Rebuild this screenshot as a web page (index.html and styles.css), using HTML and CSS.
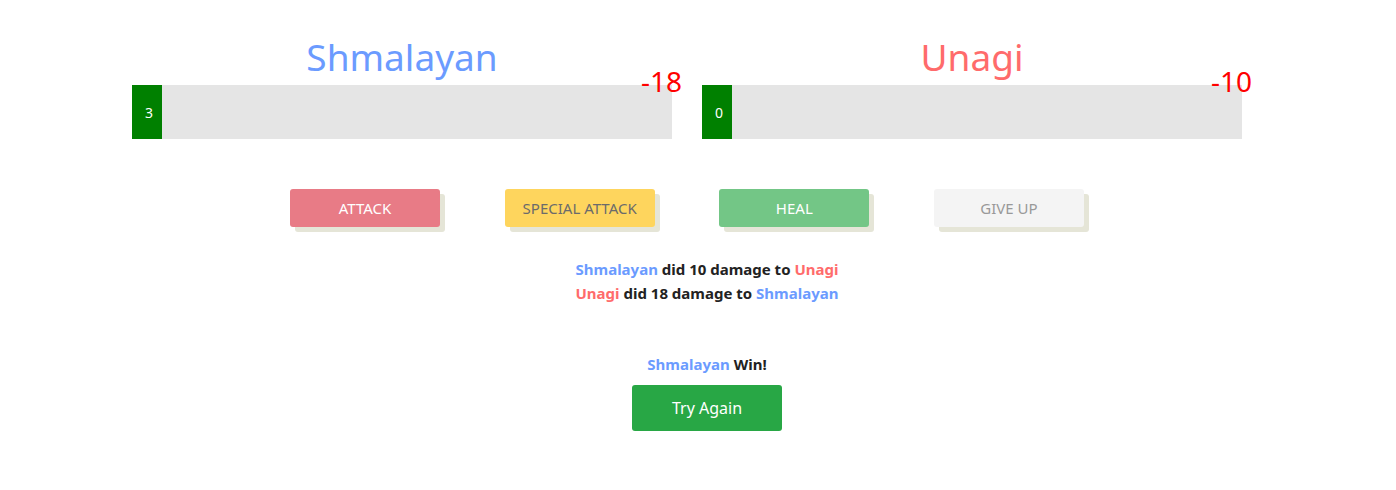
FILE: index.html
```html
<!DOCTYPE html>
<html>
<head>
<meta charset="utf-8">
<link rel="stylesheet" href="styles.css">
</head>
<body>
<div class="page">
  <div class="players">
    <div class="player">
      <h1 class="name name-you">Shmalayan</h1>
      <div class="bar">
        <div class="fill" style="width:30px">3</div>
        <span class="dmg">-18</span>
      </div>
    </div>
    <div class="player">
      <h1 class="name name-foe">Unagi</h1>
      <div class="bar">
        <div class="fill" style="width:30px">0</div>
        <span class="dmg">-10</span>
      </div>
    </div>
  </div>
  <div class="actions">
    <button class="btn btn-attack">ATTACK</button>
    <button class="btn btn-special">SPECIAL ATTACK</button>
    <button class="btn btn-heal">HEAL</button>
    <button class="btn btn-giveup">GIVE UP</button>
  </div>
  <div class="log-wrap">
    <ul class="log">
      <li><span class="you">Shmalayan</span> did 10 damage to <span class="foe">Unagi</span></li>
      <li><span class="foe">Unagi</span> did 18 damage to <span class="you">Shmalayan</span></li>
    </ul>
  </div>
  <div class="result">
    <p class="winner"><span class="you">Shmalayan</span> Win!</p>
    <button class="retry">Try Again</button>
  </div>
</div>
</body>
</html>
```
FILE: styles.css
```css
html, body {
  margin: 0;
  padding: 0;
  background: #fff;
}
body {
  font-family: "Noto Sans", "Open Sans", sans-serif;
  color: #212529;
}
.page {
  width: 1110px;
  margin-left: 132px;
}
.players {
  display: flex;
  gap: 30px;
  padding-top: 28px;
}
.player {
  flex: 1;
  display: flex;
  flex-direction: column;
  align-items: stretch;
}
.name {
  margin: 0;
  text-align: center;
  font-weight: 400;
  font-size: 37px;
  line-height: 57px;
}
.name-you { color: #6b9bff; }
.name-foe { color: #ff6b6b; }
.bar {
  position: relative;
  height: 54px;
  background: #e5e5e5;
  display: flex;
}
.fill {
  background: #008000;
  color: #fff;
  font-size: 14px;
  display: flex;
  align-items: center;
  justify-content: center;
  padding-left: 4px;
  box-sizing: border-box;
}
.dmg {
  position: absolute;
  right: -10px;
  top: -20px;
  color: #ff0000;
  font-size: 28px;
  line-height: 32px;
  font-family: "Noto Sans", sans-serif;
}
.actions {
  display: flex;
  justify-content: space-between;
  width: 794px;
  margin: 50px 0 0 158px;
}
.btn {
  width: 150px;
  height: 38px;
  border: none;
  border-radius: 3px;
  font-family: "Noto Sans", sans-serif;
  font-size: 15px;
  box-shadow: 5px 5px 0 #e5e5d7;
  padding: 0;
}
.btn-attack { background: #e87b86; color: #fff; }
.btn-special { background: #fed55d; color: #6b6b6b; }
.btn-heal { background: #73c686; color: #fff; }
.btn-giveup { background: #f4f4f4; color: #999; }
.log-wrap {
  text-align: center;
  margin-top: 30px;
}
.log {
  display: inline-block;
  text-align: left;
  list-style: none;
  margin: 0;
  padding: 0 0 0 40px;
  font-weight: 700;
  font-size: 15px;
  line-height: 24px;
  color: #222;
}
.you { color: #6b9bff; }
.foe { color: #ff6b6b; }
.result {
  display: flex;
  flex-direction: column;
  align-items: center;
  padding-left: 40px;
  margin-top: 48px;
}
.winner {
  margin: 0 0 10px;
  font-weight: 700;
  font-size: 15px;
  line-height: 22px;
  color: #222;
}
.retry {
  width: 150px;
  height: 46px;
  border: none;
  border-radius: 3px;
  background: #28a745;
  color: #fff;
  font-family: "Noto Sans", sans-serif;
  font-size: 16px;
}
```
